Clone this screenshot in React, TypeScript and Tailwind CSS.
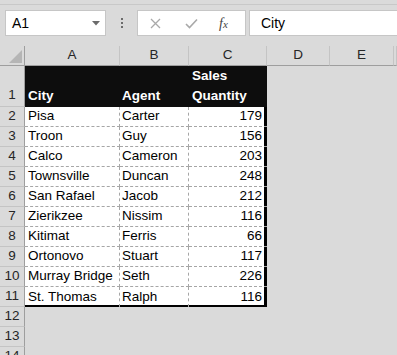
import React from "react";

const rows: [string, string, number][] = [
  ["Pisa", "Carter", 179],
  ["Troon", "Guy", 156],
  ["Calco", "Cameron", 203],
  ["Townsville", "Duncan", 248],
  ["San Rafael", "Jacob", 212],
  ["Zierikzee", "Nissim", 116],
  ["Kitimat", "Ferris", 66],
  ["Ortonovo", "Stuart", 117],
  ["Murray Bridge", "Seth", 226],
  ["St. Thomas", "Ralph", 116],
];

const font = { fontFamily: '"Liberation Sans", Arial, sans-serif' };

function RowHead({ n, tall }: { n: number; tall?: boolean }) {
  return (
    <div
      className={`box-border flex ${tall ? "h-[41px] items-end pb-[1px]" : "h-[20px] items-center"} justify-center border-r border-b border-r-[#9e9e9e] border-b-[#c4c4c4] bg-[#dadada] text-[13.5px] text-[#262626]`}
    >
      {n}
    </div>
  );
}

export default function App() {
  return (
    <div className="h-[355px] w-[397px] overflow-hidden bg-[#dadada]" style={font}>
      {/* toolbar */}
      <div className="relative h-[46px] border-t-[2px] border-t-[#dadada]">
        <div className="absolute left-0 right-0 top-[2px] h-px bg-[#c8c8c8]" />
        <div className="flex items-center pt-[8px]">
          <div className="ml-[5px] box-border flex h-[26px] w-[101px] items-center justify-between border border-[#c6c6c6] bg-white pl-[6px] pr-[5px] text-[14px] text-black">
            <span>A1</span>
            <svg width="8" height="5" viewBox="0 0 8 5">
              <path d="M0 0 L8 0 L4 4.5 Z" fill="#6b6b6b" />
            </svg>
          </div>
          <div className="ml-[15px] flex w-[2px] flex-col gap-[2px]">
            <div className="h-[2px] w-[2px] bg-[#6b6b6b]" />
            <div className="h-[2px] w-[2px] bg-[#6b6b6b]" />
            <div className="h-[2px] w-[2px] bg-[#6b6b6b]" />
          </div>
          <div className="ml-[14px] box-border flex h-[26px] w-[109px] items-center border border-[#c6c6c6] bg-white">
            <svg className="ml-[12px]" width="11" height="11" viewBox="0 0 11 11">
              <path d="M1 1 L10 10 M10 1 L1 10" stroke="#a9a9a9" strokeWidth="1.3" />
            </svg>
            <svg className="ml-[24px]" width="13" height="11" viewBox="0 0 13 11">
              <path d="M1 6 L4.5 9.5 L12 1.5" stroke="#a9a9a9" strokeWidth="1.6" fill="none" />
            </svg>
            <span
              className="ml-[21px] text-[14px] italic text-[#444]"
              style={{ fontFamily: '"Liberation Serif", "Times New Roman", serif' }}
            >
              f<span className="text-[11px]">x</span>
            </span>
          </div>
          <div className="ml-[3px] box-border flex h-[26px] flex-1 items-center border border-r-0 border-[#c6c6c6] bg-white pl-[11px] text-[14px] text-black">
            City
          </div>
        </div>
      </div>

      {/* sheet */}
      <div className="grid grid-cols-[25px_95px_69px_78px_63px_64px_1fr] text-[13.5px] text-black">
        {/* column headers */}
        <div className="relative box-border h-[20px] border-r border-b border-r-[#9e9e9e] border-b-[#9e9e9e] bg-[#dadada]">
          <svg className="absolute right-[2px] bottom-[2px]" width="13" height="13" viewBox="0 0 13 13">
            <path d="M13 0 L13 13 L0 13 Z" fill="#b5b5b5" />
          </svg>
        </div>
        {["A", "B", "C", "D", "E", ""].map((c, i) => (
          <div
            key={i}
            className="box-border flex h-[20px] items-center justify-center border-r border-b border-r-[#c4c4c4] border-b-[#9e9e9e] bg-[#dadada] text-[13.5px] text-[#262626]"
          >
            {c}
          </div>
        ))}

        {/* row 1 */}
        <RowHead n={1} tall />
        <div className="flex h-[41px] items-end bg-[#0d0d0d] pb-[1px] pl-[3px] font-bold text-white">City</div>
        <div className="flex h-[41px] items-end bg-[#0d0d0d] pb-[1px] pl-[2px] font-bold text-white">Agent</div>
        <div className="flex h-[41px] flex-col justify-end bg-[#0d0d0d] pb-[1px] pl-[3px] font-bold leading-[20px] text-white">
          <span>Sales</span>
          <span>Quantity</span>
        </div>
        <div className="col-span-3 h-[41px]" />

        {rows.map(([city, agent, qty], i) => {
          const last = i === rows.length - 1;
          const bb = last ? "" : "border-b border-b-[#a6a6a6]";
          return (
            <React.Fragment key={i}>
              <RowHead n={i + 2} />
              <div
                className={`box-border flex h-[20px] items-center overflow-hidden whitespace-nowrap border-r border-dashed border-r-[#a6a6a6] bg-white pl-[3px] ${bb} ${last ? "shadow-[inset_0_-2px_0_#000]" : ""}`}
              >
                {city}
              </div>
              <div
                className={`box-border flex h-[20px] items-center overflow-hidden whitespace-nowrap border-r border-dashed border-r-[#a6a6a6] bg-white pl-[2px] ${bb} ${last ? "shadow-[inset_0_-2px_0_#000]" : ""}`}
              >
                {agent}
              </div>
              <div
                className={`box-border flex h-[20px] items-center justify-end border-dashed bg-white pr-[5px] ${bb} ${last ? "shadow-[inset_-3px_-2px_0_#000]" : "shadow-[inset_-3px_0_0_#000]"}`}
              >
                {qty}
              </div>
              <div className="col-span-3 h-[20px]" />
            </React.Fragment>
          );
        })}

        {[12, 13, 14].map((n) => (
          <React.Fragment key={n}>
            <RowHead n={n} />
            <div className="col-span-6 h-[20px]" />
          </React.Fragment>
        ))}
      </div>
    </div>
  );
}
